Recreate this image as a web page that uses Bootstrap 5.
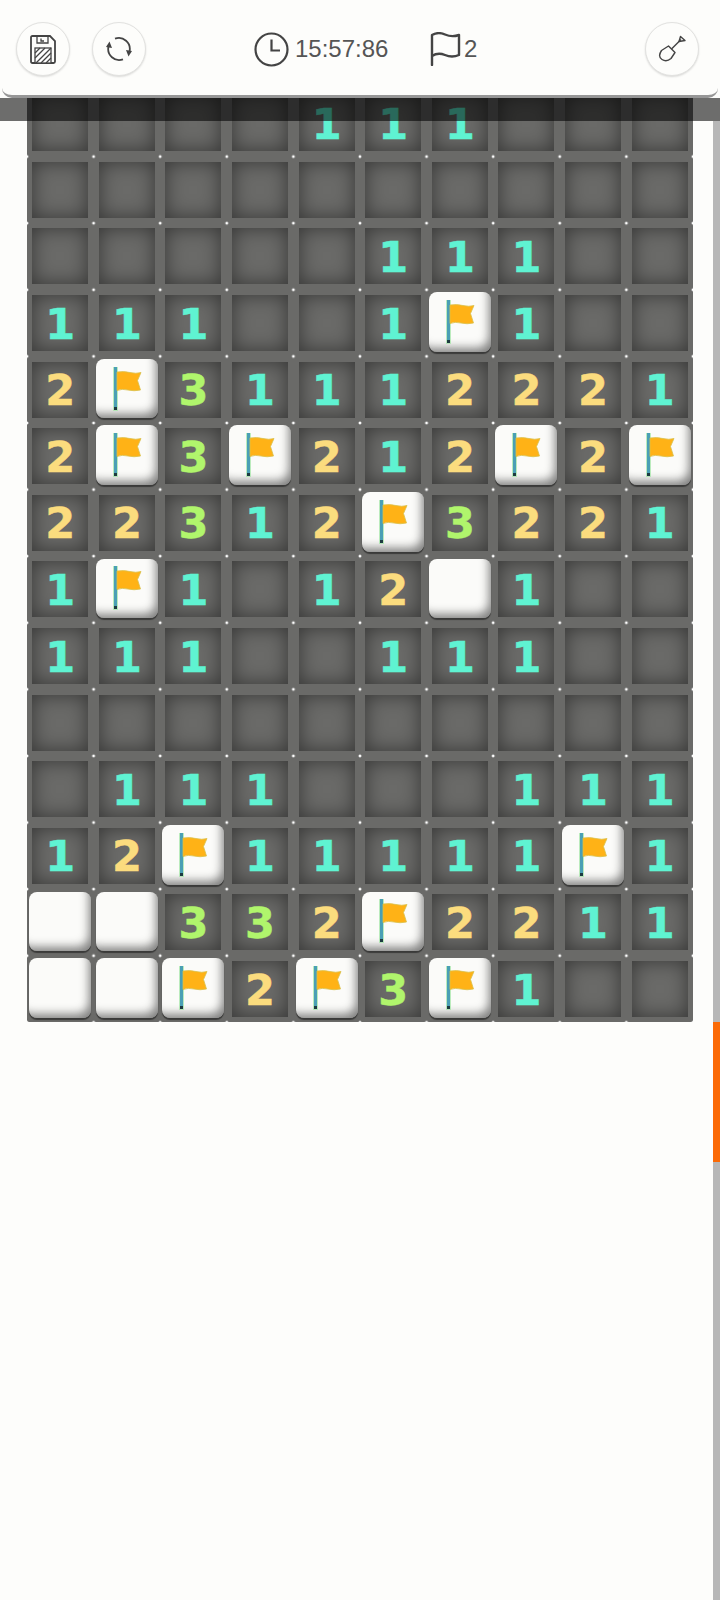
<!DOCTYPE html>
<html lang="en">

<head>
    <meta charset="UTF-8">
    <meta name="viewport" content="width=device-width, initial-scale=1.0">
    <title>Minesweeper</title>
    <link href="https://cdn.jsdelivr.net/npm/bootstrap@5.3.3/dist/css/bootstrap.min.css" rel="stylesheet">
    <style>
        html,
        body {
            height: 1600px;
            overflow: hidden;
            background: #fdfdfb;
        }

        .page-wrap {
            position: relative;
            height: 1600px;
            padding: 90px 0 0 27px;
        }

        .top-bar {
            position: absolute;
            top: 0;
            left: 2px;
            right: 2px;
            height: 98px;
            z-index: 3;
            padding: 22px 19px 0 14px;
            background: #fdfdfb;
            border-bottom: 3px solid #979797;
            border-radius: 0 0 10px 10px;
            color: #555;
            font: 24px/1 "Liberation Sans", Arial, sans-serif;
        }

        .round-btn {
            width: 54px;
            height: 54px;
            flex: none;
            padding: 0;
            background: #fdfdfb;
            border: 1px solid #e2e2e0;
            border-radius: 50%;
            box-shadow: 0 1px 2px rgba(0, 0, 0, .14);
        }

        .round-btn svg {
            display: block;
            margin: auto;
        }

        .refresh-btn {
            margin-left: 22px;
        }

        .status-item {
            height: 54px;
        }

        .clock-item {
            margin-left: 108px;
            width: 141px;
            column-gap: 6px;
        }

        .flag-item {
            margin-left: 35px;
            column-gap: 3px;
        }

        .dim-band {
            position: absolute;
            top: 98px;
            left: 0;
            right: 0;
            height: 23px;
            z-index: 2;
            background: rgba(0, 0, 0, .57);
        }

        .scroll-track {
            position: absolute;
            top: 121px;
            right: 0;
            bottom: 0;
            width: 7px;
            background: #b7b7b7;
        }

        .scroll-thumb {
            position: absolute;
            top: 901px;
            left: 0;
            width: 7px;
            height: 140px;
            background: #fb6a06;
        }

        .mine-board {
            grid-template-columns: repeat(10, 66.6px);
            grid-auto-rows: 66.6px;
            width: 666px;
            background-color: #6a6a68;
            background-image: radial-gradient(circle at 2px 2px, #fff 1px, rgba(255, 255, 255, 0) 1.8px);
            background-position: -2px -2px;
            background-size: 66.6px 66.6px;
        }

        .tile {
            display: flex;
            align-items: center;
            justify-content: center;
            margin: 5.3px;
            padding-top: 2px;
            background: #6a6a68;
            box-shadow: inset 0 0 20px rgba(0, 0, 0, .5);
            font: bold 43px/1 "DejaVu Sans", sans-serif;
            -webkit-text-stroke: .5px currentColor;
        }

        .tile.n1 {
            color: #5ff3d2;
        }

        .tile.n2 {
            color: #fbdc7e;
        }

        .tile.n3 {
            color: #b0f56c;
        }

        .tile.raised {
            margin: 2.4px 2.3px 4.6px 2.3px;
            padding-top: 0;
            background: #fbfbf9;
            border-radius: 8px;
            box-shadow: inset -6px -8px 10px -4px rgba(50, 50, 50, .6), 0 2px 1px rgba(0, 0, 0, .45);
        }
    </style>
</head>

<body>
    <svg width="0" height="0" class="position-absolute">
        <symbol id="flag-sym" viewBox="0 0 30 46">
            <rect x="1" y="1" width="5" height="44" fill="#a5e6a8" opacity=".75"></rect>
            <rect x="2" y="1" width="3" height="43" fill="#4a9fb5"></rect>
            <rect x="2" y="41" width="3" height="3" fill="#1d3a40"></rect>
            <path d="M5 6Q12 5 18 6.500T29 6.500L25.500 14.500 28.500 24Q22 25.500 16 24T5 24.500Z" fill="#ffb216"
                stroke="#d9c04a" stroke-width=".8"></path>
        </symbol>
    </svg>

    <div class="page-wrap">
        <header class="top-bar d-flex align-items-start">
            <button class="round-btn d-flex align-items-center" type="button" aria-label="Save">
                <svg width="26" height="29" viewBox="0 0 26 29" fill="none" stroke="#444" stroke-width="1.800">
                    <path d="M1 2.500Q1 1 2.500 1H20L25 6V26.500Q25 28 23.500 28H2.500Q1 28 1 26.500Z"></path>
                    <path d="M7 1V8H18V1M11 3.500V6H14" stroke-width="1.300"></path>
                    <rect x="5" y="13" width="16" height="15" fill="#fff" stroke-width="1.300"></rect>
                    <path d="M5 18L10 13M5 23L15 13M6 28L21 13M11 28L21 18M16 28L21 23" stroke-width="1.300"></path>
                </svg>
            </button>
            <button class="round-btn refresh-btn d-flex align-items-center" type="button" aria-label="Restart">
                <svg width="26" height="26" viewBox="0 0 26 26" fill="none" stroke="#444" stroke-width="1.800">
                    <path d="M9 2.700A11 11 0 0 1 23.500 15.500"></path>
                    <path d="M17 23.300A11 11 0 0 1 2.500 10.500"></path>
                    <path d="M20 14L26 15 22.500 20.500Z" fill="#444" stroke="none"></path>
                    <path d="M6 12L0 11 3.500 5.500Z" fill="#444" stroke="none"></path>
                </svg>
            </button>

            <div class="status-item clock-item d-flex align-items-center">
                <svg width="35" height="35" viewBox="0 0 35 35" fill="none" stroke="#444" stroke-width="2.200">
                    <circle cx="17.500" cy="17.500" r="16"></circle>
                    <path d="M17.500 7.500V18.500H26"></path>
                </svg>
                <span>15:57:86</span>
            </div>
            <div class="status-item flag-item d-flex align-items-center">
                <svg width="31" height="34" viewBox="0 0 31 34" fill="none" stroke="#444" stroke-width="2.400"
                    stroke-linecap="round" stroke-linejoin="round">
                    <path d="M2 33V3Q8 -0.500 15 2.500T29 3V23Q22 26 15 23T2 24"></path>
                </svg>
                <span>2</span>
            </div>

            <button class="round-btn d-flex align-items-center ms-auto" type="button" aria-label="Dig">
                <svg width="28" height="28" viewBox="0 0 28 28" fill="none" stroke="#444" stroke-width="1.400"
                    stroke-linejoin="round">
                    <path d="M10.500 11L17 17.500 13 23.500Q8.500 27.500 4 24.500T3.500 15.500Z"></path>
                    <path d="M13.500 14L23 4.500"></path>
                    <path d="M22.500 1.500L27 5.500 21 6.500Z"></path>
                </svg>
            </button>
        </header>

        <div class="dim-band"></div>

        <main id="board" class="mine-board d-grid"></main>

        <div class="scroll-track">
            <div class="scroll-thumb"></div>
        </div>
    </div>

    <script>
        // . = open blank, F = flagged, W = still covered
        const rows = [
            '....111...',
            '..........',
            '.....111..',
            '111..1F1..',
            '2F31112221',
            '2F3F212F2F',
            '22312F3221',
            '1F1.12W1..',
            '111..111..',
            '..........',
            '.111...111',
            '12F11111F1',
            'WW332F2211',
            'WWF2F3F1..'
        ];

        const board = document.getElementById('board');

        rows.forEach(row => {
            row.split('').forEach(ch => {
                const tile = document.createElement('div');
                tile.className = 'tile';
                if (ch === 'W') {
                    tile.classList.add('raised');
                } else if (ch === 'F') {
                    tile.classList.add('raised');
                    tile.innerHTML = '<svg width="30" height="46"><use href="#flag-sym"></use></svg>';
                } else if (ch !== '.') {
                    tile.classList.add('n' + ch);
                    tile.textContent = ch;
                }
                board.appendChild(tile);
            });
        });
    </script>
    <script src="https://cdn.jsdelivr.net/npm/bootstrap@5.3.3/dist/js/bootstrap.bundle.min.js"></script>
</body>

</html>
